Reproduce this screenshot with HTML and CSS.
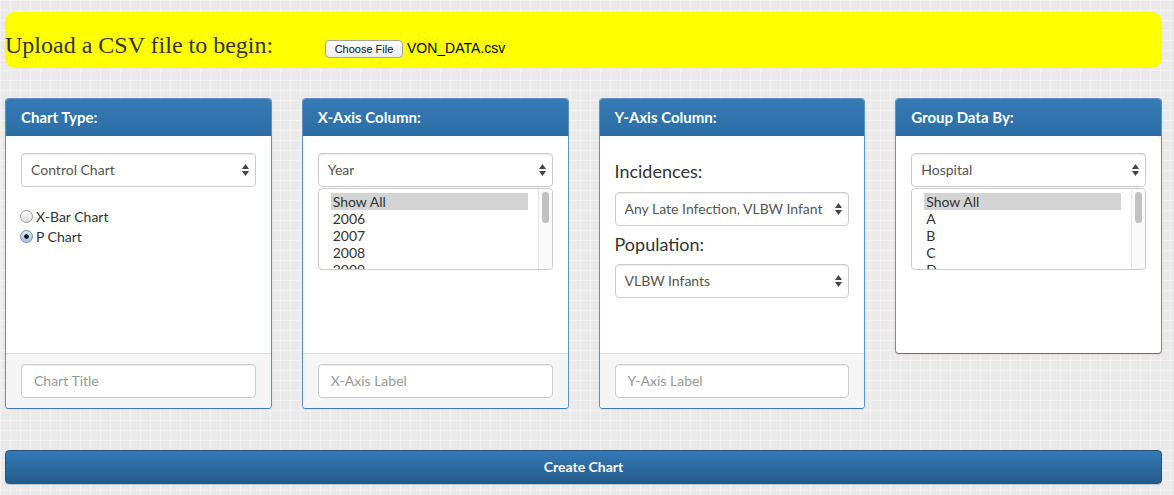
FILE: index.html
```html
<!DOCTYPE html>
<html>
<head>
<meta charset="utf-8">
<title>Control Chart Builder</title>
<link rel="stylesheet" href="styles.css">
</head>
<body>
<div class="page">
  <div class="banner">
    <div class="banner-label">Upload a CSV file to begin:</div>
    <button class="file-btn" type="button">Choose File</button>
    <span class="file-name">VON_DATA.csv</span>
  </div>

  <div class="panels">
    <div class="panel">
      <div class="panel-heading">Chart Type:</div>
      <div class="panel-body">
        <div class="select"><span>Control Chart</span>
          <svg class="arrows" width="7" height="12" viewBox="0 0 7 12"><polygon points="3.5,0 7,5 0,5"/><polygon points="0,7 7,7 3.5,12"/></svg>
        </div>
        <div class="radios">
          <div class="radio-row"><span class="radio"></span>X-Bar Chart</div>
          <div class="radio-row"><span class="radio checked"></span>P Chart</div>
        </div>
      </div>
      <div class="panel-footer"><div class="input placeholder">Chart Title</div></div>
    </div>

    <div class="panel">
      <div class="panel-heading">X-Axis Column:</div>
      <div class="panel-body">
        <div class="select"><span>Year</span>
          <svg class="arrows" width="7" height="12" viewBox="0 0 7 12"><polygon points="3.5,0 7,5 0,5"/><polygon points="0,7 7,7 3.5,12"/></svg>
        </div>
        <div class="listbox">
          <div class="options">
            <div class="option selected">Show All</div>
            <div class="option">2006</div>
            <div class="option">2007</div>
            <div class="option">2008</div>
            <div class="option">2009</div>
          </div>
          <div class="track"><div class="thumb"></div></div>
        </div>
      </div>
      <div class="panel-footer"><div class="input placeholder">X-Axis Label</div></div>
    </div>

    <div class="panel">
      <div class="panel-heading">Y-Axis Column:</div>
      <div class="panel-body">
        <div class="field-label first">Incidences:</div>
        <div class="select"><span>Any Late Infection, VLBW Infant</span>
          <svg class="arrows" width="7" height="12" viewBox="0 0 7 12"><polygon points="3.5,0 7,5 0,5"/><polygon points="0,7 7,7 3.5,12"/></svg>
        </div>
        <div class="field-label">Population:</div>
        <div class="select"><span>VLBW Infants</span>
          <svg class="arrows" width="7" height="12" viewBox="0 0 7 12"><polygon points="3.5,0 7,5 0,5"/><polygon points="0,7 7,7 3.5,12"/></svg>
        </div>
      </div>
      <div class="panel-footer"><div class="input placeholder">Y-Axis Label</div></div>
    </div>

    <div class="panel">
      <div class="panel-heading">Group Data By:</div>
      <div class="panel-body">
        <div class="select"><span>Hospital</span>
          <svg class="arrows" width="7" height="12" viewBox="0 0 7 12"><polygon points="3.5,0 7,5 0,5"/><polygon points="0,7 7,7 3.5,12"/></svg>
        </div>
        <div class="listbox">
          <div class="options">
            <div class="option selected">Show All</div>
            <div class="option">A</div>
            <div class="option">B</div>
            <div class="option">C</div>
            <div class="option">D</div>
          </div>
          <div class="track"><div class="thumb"></div></div>
        </div>
      </div>
    </div>
  </div>

  <button class="create-btn" type="button">Create Chart</button>
</div>
</body>
</html>
```

FILE: styles.css
```css
* { box-sizing: border-box; }

html, body { margin: 0; padding: 0; }

body {
  width: 1174px;
  height: 495px;
  overflow: hidden;
  font-family: Lato, "Open Sans", sans-serif;
  font-size: 14px;
  color: #333;
  background-color: #eaeaea;
  background-image:
    linear-gradient(#f2f2f2 1px, transparent 1px),
    linear-gradient(90deg, #f2f2f2 1px, transparent 1px);
  background-size: 10px 10px;
}

.page {
  padding: 12px 12px 0 5px;
}

/* Banner */
.banner {
  display: flex;
  align-items: baseline;
  height: 56px;
  padding-top: 19px;
  background: #ffff00;
  border-radius: 10px;
}

.banner-label {
  width: 320px;
  font-family: "Liberation Serif", "Times New Roman", serif;
  font-size: 24px;
  line-height: 28px;
  color: #333;
}

.file-btn {
  height: 18px;
  width: 78px;
  padding: 0;
  font-family: "Liberation Sans", Arial, sans-serif;
  font-size: 11px;
  color: #111;
  background: linear-gradient(#ffffff, #ececec);
  border: 1px solid #a6a6a6;
  border-radius: 4px;
}

.file-name {
  margin-left: 4px;
  font-family: "Liberation Sans", Arial, sans-serif;
  font-size: 14px;
  color: #000;
}

/* Panels */
.panels {
  display: grid;
  grid-template-columns: repeat(4, 1fr);
  column-gap: 30px;
  align-items: start;
  margin-top: 30px;
}

.panel {
  background: #fff;
  border: 1px solid #5a91c7;
  border-bottom-color: #3b7cb9;
  border-radius: 4px;
  box-shadow: 0 1px 2px rgba(0, 0, 0, 0.05);
  overflow: hidden;
}

.panel-heading {
  padding: 10px 15px;
  line-height: 17px;
  font-size: 15px;
  font-weight: bold;
  color: #fff;
  background: linear-gradient(#337ab7, #2e6da4);
}

.panel-body {
  height: 217px;
  padding: 17px 15px 15px 15px;
}

.panel-footer {
  padding: 10px 15px;
  background: #f5f5f5;
  border-top: 1px solid #ddd;
}

/* Form controls */
.select {
  display: flex;
  align-items: center;
  justify-content: space-between;
  height: 34px;
  padding: 0 6px 2px 9px;
  color: #555;
  background: #fff;
  border: 1px solid #ccc;
  border-radius: 4px;
  box-shadow: inset 0 1px 1px rgba(0, 0, 0, 0.075);
  white-space: nowrap;
}

.select span { overflow: hidden; }

.arrows {
  flex: none;
  fill: #444;
  margin-top: 2px;
}

.input {
  height: 34px;
  padding: 0 12px;
  line-height: 31px;
  background: #fff;
  border: 1px solid #ccc;
  border-radius: 4px;
  box-shadow: inset 0 1px 1px rgba(0, 0, 0, 0.075);
}

.placeholder { color: #999; }

/* Radios */
.radios {
  margin-top: 19px;
}

.radio-row {
  display: flex;
  align-items: center;
  height: 20px;
  gap: 3px;
}

.radio {
  width: 13px;
  height: 13px;
  margin-left: -1px;
  border-radius: 50%;
  border: 1px solid #9a9a9a;
  background: linear-gradient(#ffffff, #dcdcdc);
}

.radio.checked {
  border-color: #6f8db3;
  background:
    radial-gradient(circle, #111 0 2px, transparent 2.5px),
    linear-gradient(#dce8f6, #a8c3e3);
}

/* Listbox */
.listbox {
  display: flex;
  height: 82px;
  margin-top: 1px;
  border: 1px solid #ccc;
  border-radius: 4px;
  overflow: hidden;
  background: #fff;
}

.options {
  flex: 1;
  padding: 4px 10px 0 12px;
  overflow: hidden;
}

.option {
  height: 17px;
  line-height: 17px;
  padding: 0 2px;
  color: #333;
}

.option.selected { background: #d4d4d4; }

.track {
  flex: none;
  width: 14px;
  padding: 3px 0 0 3px;
  background: #fafafa;
  border-left: 1px solid #e6e6e6;
}

.thumb {
  width: 7px;
  height: 31px;
  border-radius: 4px;
  background: #c1c1c1;
}

/* Y-axis labels */
.field-label {
  margin: 5px 0 7px;
  font-size: 18px;
  line-height: 26px;
  color: #333;
}

.field-label.first { margin: 5px 0 8px; }

/* Create button */
.create-btn {
  display: block;
  width: 100%;
  height: 34px;
  margin-top: 41px;
  padding: 0 0 2px;
  font-family: Lato, "Open Sans", sans-serif;
  font-size: 14px;
  font-weight: bold;
  color: #fff;
  background: linear-gradient(#337ab7, #265a88);
  border: 1px solid #245580;
  border-radius: 4px;
  box-shadow: 0 1px 1px rgba(0, 0, 0, 0.15);
}
```
